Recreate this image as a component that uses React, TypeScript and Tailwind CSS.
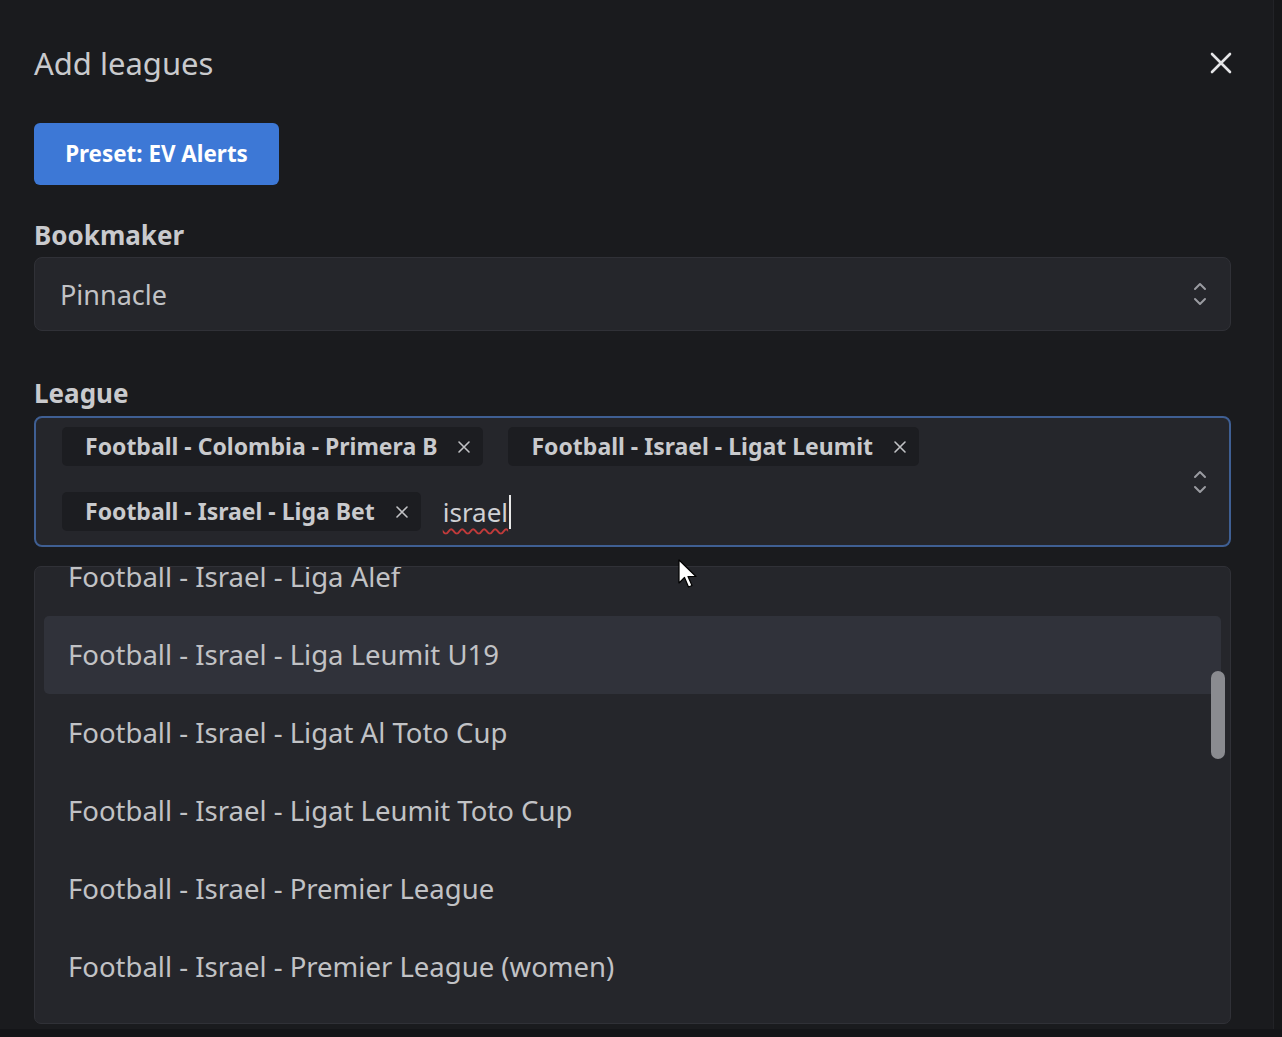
import React from "react";

const Chevrons = () => (
  <svg width="16" height="26" viewBox="0 0 16 26" fill="none" stroke="#9a9ba1" strokeWidth="2" strokeLinecap="round" strokeLinejoin="round">
    <path d="M3 8 L8 3 L13 8" />
    <path d="M3 18 L8 23 L13 18" />
  </svg>
);

const SmallX = () => (
  <svg width="14" height="14" viewBox="0 0 14 14" fill="none" stroke="#c1c2c5" strokeWidth="1.6" strokeLinecap="round">
    <path d="M2 2 L12 12 M12 2 L2 12" />
  </svg>
);

const Tag = ({ label }: { label: string }) => (
  <div className="flex items-center h-[39px] pl-[23px] pr-[12px] rounded-[5px] bg-[#1c1d21] gap-[20px]">
    <span className="text-[23px] font-bold text-[#c9cacd] leading-none whitespace-nowrap">{label}</span>
    <SmallX />
  </div>
);

const items = [
  "Football - Israel - Liga Alef",
  "Football - Israel - Liga Leumit U19",
  "Football - Israel - Ligat Al Toto Cup",
  "Football - Israel - Ligat Leumit Toto Cup",
  "Football - Israel - Premier League",
  "Football - Israel - Premier League (women)",
];

export default function App() {
  return (
    <div
      className="relative w-full h-[1037px] bg-[#141518] flex overflow-hidden"
      style={{ fontFamily: '"Noto Sans", "Open Sans", sans-serif' }}
    >
      <div className="w-[1273px] h-[1029px] bg-[#1a1b1e] flex flex-col pl-[34px] pr-[42px] pt-[44px]">
        <div className="flex items-center justify-between h-[38px]">
          <h1 className="text-[31px] leading-[38px] text-[#c9cacd] font-normal">Add leagues</h1>
          <svg width="22" height="22" viewBox="0 0 22 22" fill="none" stroke="#e4e5e7" strokeWidth="2.6" strokeLinecap="round" className="mr-[-1px]">
            <path d="M2 2 L20 20 M20 2 L2 20" />
          </svg>
        </div>

        <button className="mt-[41px] w-[245px] h-[62px] rounded-[6px] bg-[#3d78d6] text-white text-[22.4px] font-bold flex items-center justify-center">
          Preset: EV Alerts
        </button>

        <div className="mt-[34px] h-[32px] text-[26px] font-bold leading-[32px] text-[#c9cacd]">Bookmaker</div>
        <div className="mt-[6px] h-[74px] rounded-[8px] border border-[#303137] bg-[#25262b] flex items-center justify-between pl-[25px] pr-[22px]">
          <span className="text-[27px] text-[#c1c2c5] mt-[3px]">Pinnacle</span>
          <Chevrons />
        </div>

        <div className="mt-[46px] h-[32px] text-[26px] font-bold leading-[32px] text-[#c9cacd]">League</div>
        <div className="mt-[7px] h-[131px] rounded-[8px] border-2 border-[#3f5f93] bg-[#25262b] flex items-start justify-between pl-[26px] pr-[21px] pt-[9px]">
          <div className="flex flex-col gap-[26px]">
            <div className="flex gap-[25px]">
              <Tag label="Football - Colombia - Primera B" />
              <Tag label="Football - Israel - Ligat Leumit" />
            </div>
            <div className="flex items-center gap-[22px]">
              <Tag label="Football - Israel - Liga Bet" />
              <div className="flex items-center">
                <span className="text-[26px] text-[#d0d1d4] leading-none underline decoration-wavy decoration-[#c23a3a] decoration-[1.5px] underline-offset-[6px]">
                  israel
                </span>
                <span className="w-[2px] h-[34px] bg-[#e8e8e8] ml-[1px]" />
              </div>
            </div>
          </div>
          <div className="self-center -mt-[8px]">
            <Chevrons />
          </div>
        </div>

        <div className="relative mt-[19px] h-[458px] rounded-[7px] border border-[#303137] bg-[#25262b] overflow-hidden px-[9px]">
          <div className="mt-[-29px] flex flex-col">
            {items.map((it, i) => (
              <div
                key={it}
                className={
                  "h-[78px] shrink-0 flex items-center pl-[24px] rounded-[5px] " +
                  (i === 1 ? "bg-[#30323a]" : "")
                }
              >
                <span className="text-[27.5px] text-[#c1c2c5] whitespace-nowrap">{it}</span>
              </div>
            ))}
          </div>
          <div className="absolute right-[5px] top-[104px] w-[14px] h-[88px] rounded-full bg-[#8a8b90]" />
        </div>
      </div>
      <div className="flex-1 h-[1029px] bg-[#161719] border-l border-[#222327]" />

      <svg
        className="absolute left-[678px] top-[559px]"
        width="22"
        height="32"
        viewBox="0 0 22 32"
      >
        <path d="M1 1 L1 24 L6.5 18.5 L10.5 28 L14 26.5 L10 17.5 L18 17.5 Z" fill="#ffffff" stroke="#000000" strokeWidth="1.2" strokeLinejoin="round" />
      </svg>
    </div>
  );
}
